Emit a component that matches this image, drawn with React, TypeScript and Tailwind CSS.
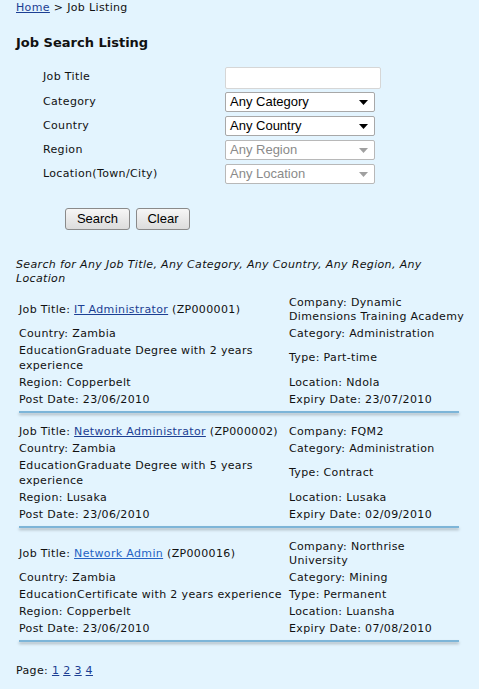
import React from "react";

const V = { fontFamily: '"DejaVu Sans", Verdana, sans-serif' };
const A = { fontFamily: '"Liberation Sans", Arial, sans-serif' };

type Job = {
  title: string;
  code: string;
  linkClass: string;
  company: string;
  country: string;
  category: string;
  education: string;
  type: string;
  region: string;
  location: string;
  post: string;
  expiry: string;
};

const jobs: Job[] = [
  {
    title: "IT Administrator",
    code: "ZP000001",
    linkClass: "text-[#1c3f93]",
    company: "Dynamic Dimensions Training Academy",
    country: "Zambia",
    category: "Administration",
    education: "Graduate Degree with 2 years experience",
    type: "Part-time",
    region: "Copperbelt",
    location: "Ndola",
    post: "23/06/2010",
    expiry: "23/07/2010",
  },
  {
    title: "Network Administrator",
    code: "ZP000002",
    linkClass: "text-[#1c3f93]",
    company: "FQM2",
    country: "Zambia",
    category: "Administration",
    education: "Graduate Degree with 5 years experience",
    type: "Contract",
    region: "Lusaka",
    location: "Lusaka",
    post: "23/06/2010",
    expiry: "02/09/2010",
  },
  {
    title: "Network Admin",
    code: "ZP000016",
    linkClass: "text-[#2563c4]",
    company: "Northrise University",
    country: "Zambia",
    category: "Mining",
    education: "Certificate with 2 years experience",
    type: "Permanent",
    region: "Copperbelt",
    location: "Luansha",
    post: "23/06/2010",
    expiry: "07/08/2010",
  },
];

function Cell({ children }: { children: React.ReactNode }) {
  return <div className="py-[1.5px] leading-[14px]">{children}</div>;
}

function Listing({ j }: { j: Job }) {
  return (
    <div>
      <div className="grid grid-cols-[270px_176px] items-center pl-[19px] text-[11px] text-[#111]">
        <Cell>
          Job Title:{" "}
          <a href="#" className={`underline ${j.linkClass}`}>
            {j.title}
          </a>{" "}
          ({j.code})
        </Cell>
        <Cell>Company: {j.company}</Cell>
        <Cell>Country: {j.country}</Cell>
        <Cell>Category: {j.category}</Cell>
        <div className="py-[1px] leading-[15px]">Education{j.education}</div>
        <Cell>Type: {j.type}</Cell>
        <Cell>Region: {j.region}</Cell>
        <Cell>Location: {j.location}</Cell>
        <Cell>Post Date: {j.post}</Cell>
        <Cell>Expiry Date: {j.expiry}</Cell>
      </div>
      <div className="ml-[19px] mt-[3px] w-[440px] h-[2px] bg-[#7db5d8] shadow-[0_2px_3px_rgba(0,0,0,0.28)]" />
    </div>
  );
}

function Select({ label, disabled }: { label: string; disabled?: boolean }) {
  return (
    <div
      className={`flex h-[20px] w-[150px] items-center justify-between rounded-[2px] border bg-white pl-[4px] pr-[6px] text-[13px] tracking-normal ${
        disabled ? "border-[#b8b8b8] text-[#8a8a8a]" : "border-[#a8a8a8] text-black"
      }`}
      style={A}
    >
      <span>{label}</span>
      <svg width="9" height="5" viewBox="0 0 9 5">
        <path d="M0 0h9L4.5 5z" fill={disabled ? "#a0a0a0" : "#000"} />
      </svg>
    </div>
  );
}

export default function App() {
  const rows: [string, React.ReactNode][] = [
    ["Category", <Select label="Any Category" />],
    ["Country", <Select label="Any Country" />],
    ["Region", <Select label="Any Region" disabled />],
    ["Location(Town/City)", <Select label="Any Location" disabled />],
  ];
  return (
    <div className="min-h-[689px] w-[479px] bg-[#e3f4fe] text-[#111] tracking-[0.35px]" style={V}>
      <div className="px-[16px] pt-[1px] text-[11px] leading-[14px]">
        <a href="#" className="text-[#1c3f93] underline">
          Home
        </a>{" "}
        &gt; Job Listing
      </div>
      <h1 className="mt-[20px] px-[16px] text-[13px] font-bold leading-[16px] tracking-normal">
        Job Search Listing
      </h1>

      <div className="mt-[14px] flex flex-col">
        <div className="flex h-[25px] items-center">
          <div className="w-[225px] pl-[43px] text-[11px]">Job Title</div>
          <div className="h-[22px] w-[156px] rounded-[2px] border border-[#d6d6d6] bg-white" />
        </div>
        {rows.map(([l, c]) => (
          <div key={l} className="flex h-[24px] items-center">
            <div className="w-[225px] pl-[43px] text-[11px]">{l}</div>
            {c}
          </div>
        ))}
      </div>

      <div className="mt-[22px] flex gap-[6px] pl-[65px]" style={A}>
        <button className="h-[22px] w-[65px] rounded-[3px] border border-[#8a8a8a] bg-gradient-to-b from-[#f6f6f6] to-[#dcdcdc] text-[13px] tracking-normal text-black">
          Search
        </button>
        <button className="h-[22px] w-[54px] rounded-[3px] border border-[#8a8a8a] bg-gradient-to-b from-[#f6f6f6] to-[#dcdcdc] text-[13px] tracking-normal text-black">
          Clear
        </button>
      </div>

      <p className="mt-[28px] w-[430px] pl-[16px] text-[11px] italic leading-[14px]">
        Search for Any Job Title, Any Category, Any Country, Any Region, Any Location
      </p>

      <div className="mt-[8px] flex flex-col gap-[10px]">
        {jobs.map((j) => (
          <Listing key={j.code} j={j} />
        ))}
      </div>

      <div className="mt-[21px] pl-[16px] text-[11px]">
        Page:{" "}
        {["1", "2", "3", "4"].map((p) => (
          <React.Fragment key={p}>
            <a href="#" className="text-[#1c3f93] underline">
              {p}
            </a>{" "}
          </React.Fragment>
        ))}
      </div>
    </div>
  );
}
